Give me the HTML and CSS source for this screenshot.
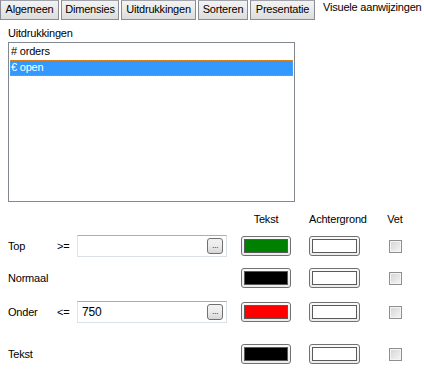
FILE: index.html
```html
<!DOCTYPE html>
<html>
<head>
<meta charset="utf-8">
<link rel="stylesheet" href="styles.css">
</head>
<body>
<div class="tabs">
  <div class="tab t1">Algemeen</div>
  <div class="tab t2">Dimensies</div>
  <div class="tab t3">Uitdrukkingen</div>
  <div class="tab t4">Sorteren</div>
  <div class="tab t5">Presentatie</div>
  <div class="tab active">Visuele aanwijzingen</div>
</div>
<div class="panel">
  <div class="list-label">Uitdrukkingen</div>
  <div class="listbox">
    <div class="item"># orders</div>
    <div class="item selected">€ open</div>
  </div>
  <div class="grid">
    <div class="row header">
      <div class="c-label"></div><div class="c-op"></div><div class="c-input"></div>
      <div class="c-col">Tekst</div>
      <div class="c-col c-bg">Achtergrond</div>
      <div class="c-vet">Vet</div>
    </div>
    <div class="row r-top">
      <div class="c-label">Top</div><div class="c-op">&gt;=</div>
      <div class="c-input"><div class="input"><span class="val"></span><span class="ell">...</span></div></div>
      <div class="c-col"><div class="cbtn"><div class="sw green"></div></div></div>
      <div class="c-col c-bg"><div class="cbtn"><div class="sw white"></div></div></div>
      <div class="c-vet"><div class="chk"></div></div>
    </div>
    <div class="row r-norm">
      <div class="c-label">Normaal</div><div class="c-op"></div><div class="c-input"></div>
      <div class="c-col"><div class="cbtn"><div class="sw black"></div></div></div>
      <div class="c-col c-bg"><div class="cbtn"><div class="sw white"></div></div></div>
      <div class="c-vet"><div class="chk"></div></div>
    </div>
    <div class="row r-onder">
      <div class="c-label">Onder</div><div class="c-op">&lt;=</div>
      <div class="c-input"><div class="input"><span class="val">750</span><span class="ell">...</span></div></div>
      <div class="c-col"><div class="cbtn"><div class="sw red"></div></div></div>
      <div class="c-col c-bg"><div class="cbtn"><div class="sw white"></div></div></div>
      <div class="c-vet"><div class="chk"></div></div>
    </div>
    <div class="row r-tekst">
      <div class="c-label">Tekst</div><div class="c-op"></div><div class="c-input"></div>
      <div class="c-col"><div class="cbtn"><div class="sw black"></div></div></div>
      <div class="c-col c-bg"><div class="cbtn"><div class="sw white"></div></div></div>
      <div class="c-vet"><div class="chk"></div></div>
    </div>
  </div>
</div>
</body>
</html>
```
FILE: styles.css
```css
* { box-sizing: border-box; }
html, body { margin: 0; padding: 0; }
body {
  width: 424px;
  height: 369px;
  background: #ffffff;
  font-family: "Liberation Sans", Arial, sans-serif;
  font-size: 11px;
  letter-spacing: -0.2px;
  color: #000;
  overflow: hidden;
}
.tabs {
  display: flex;
  height: 20px;
  gap: 2px;
}
.tab {
  height: 20px;
  border: 1px solid #898c95;
  border-top-color: #a0a3aa;
  background: linear-gradient(#f3f3f3, #e9e9e9 50%, #dcdcdc);
  line-height: 17px;
  text-align: center;
  white-space: nowrap;
  overflow: hidden;
}
.t1 { width: 59px; }
.t2 { width: 58px; }
.t3 { width: 75px; }
.t4 { width: 50px; }
.t5 { width: 65px; }
.tab.active {
  border: none;
  background: #fff;
  padding-left: 6px;
  text-align: left;
  line-height: 15px;
  overflow: visible;
}
.panel {
  padding: 7px 0 0 8px;
}
.list-label {
  height: 15px;
  line-height: 13px;
}
.listbox {
  width: 287px;
  height: 160px;
  border: 1px solid #828790;
  padding: 1px;
}
.item {
  height: 16px;
  line-height: 15px;
  padding-left: 1px;
}
.item.selected {
  background: #3399ff;
  color: #fff;
  border: 1px dotted #e08a2a;
  line-height: 13px;
  padding-left: 0;
}
.grid {
  margin-top: 10px;
}
.row {
  display: flex;
  align-items: center;
  height: 22px;
}
.row.header { height: 14px; }
.r-top { margin-top: 9px; }
.r-norm { margin-top: 10px; }
.r-onder { margin-top: 12px; }
.r-tekst { margin-top: 20px; }
.c-label { width: 49px; }
.c-op { width: 20px; }
.c-input { width: 150px; margin-right: 14px; }
.c-col { width: 50px; text-align: center; white-space: nowrap; }
.c-bg { margin-left: 18px; width: 51px; }
.c-vet { margin-left: 24px; width: 22px; text-align: center; }
.input {
  width: 150px;
  height: 22px;
  border: 1px solid #dbdfe6;
  border-top-color: #abadb3;
  border-left-color: #e2e3ea;
  display: flex;
  align-items: center;
  justify-content: space-between;
  padding: 0 3px 0 4px;
  font-size: 12px;
}
.ell {
  width: 16px;
  height: 16px;
  border: 1px solid #707070;
  border-radius: 3px;
  background: linear-gradient(#f2f2f2, #ebebeb 50%, #d6d6d6);
  font-size: 9px;
  color: #3b3b8f;
  line-height: 12px;
  text-align: center;
  letter-spacing: -0.5px;
}
.cbtn {
  width: 50px;
  height: 20px;
  border: 1px solid #707070;
  border-radius: 3px;
  background: linear-gradient(#fafafa, #ececec);
  padding: 2px;
}
.c-bg .cbtn { width: 51px; }
.sw {
  width: 100%;
  height: 100%;
  border: 1px solid #5a5a5a;
}
.green { background: #008000; }
.black { background: #000000; }
.red { background: #ff0000; }
.white { background: #ffffff; }
.chk {
  width: 13px;
  height: 13px;
  margin: 0 auto;
  border: 1px solid #8f8f8f;
  background: linear-gradient(135deg, #d4d4d4, #f6f6f6);
  box-shadow: inset 0 0 0 1px #f4f4f4;
}
```
